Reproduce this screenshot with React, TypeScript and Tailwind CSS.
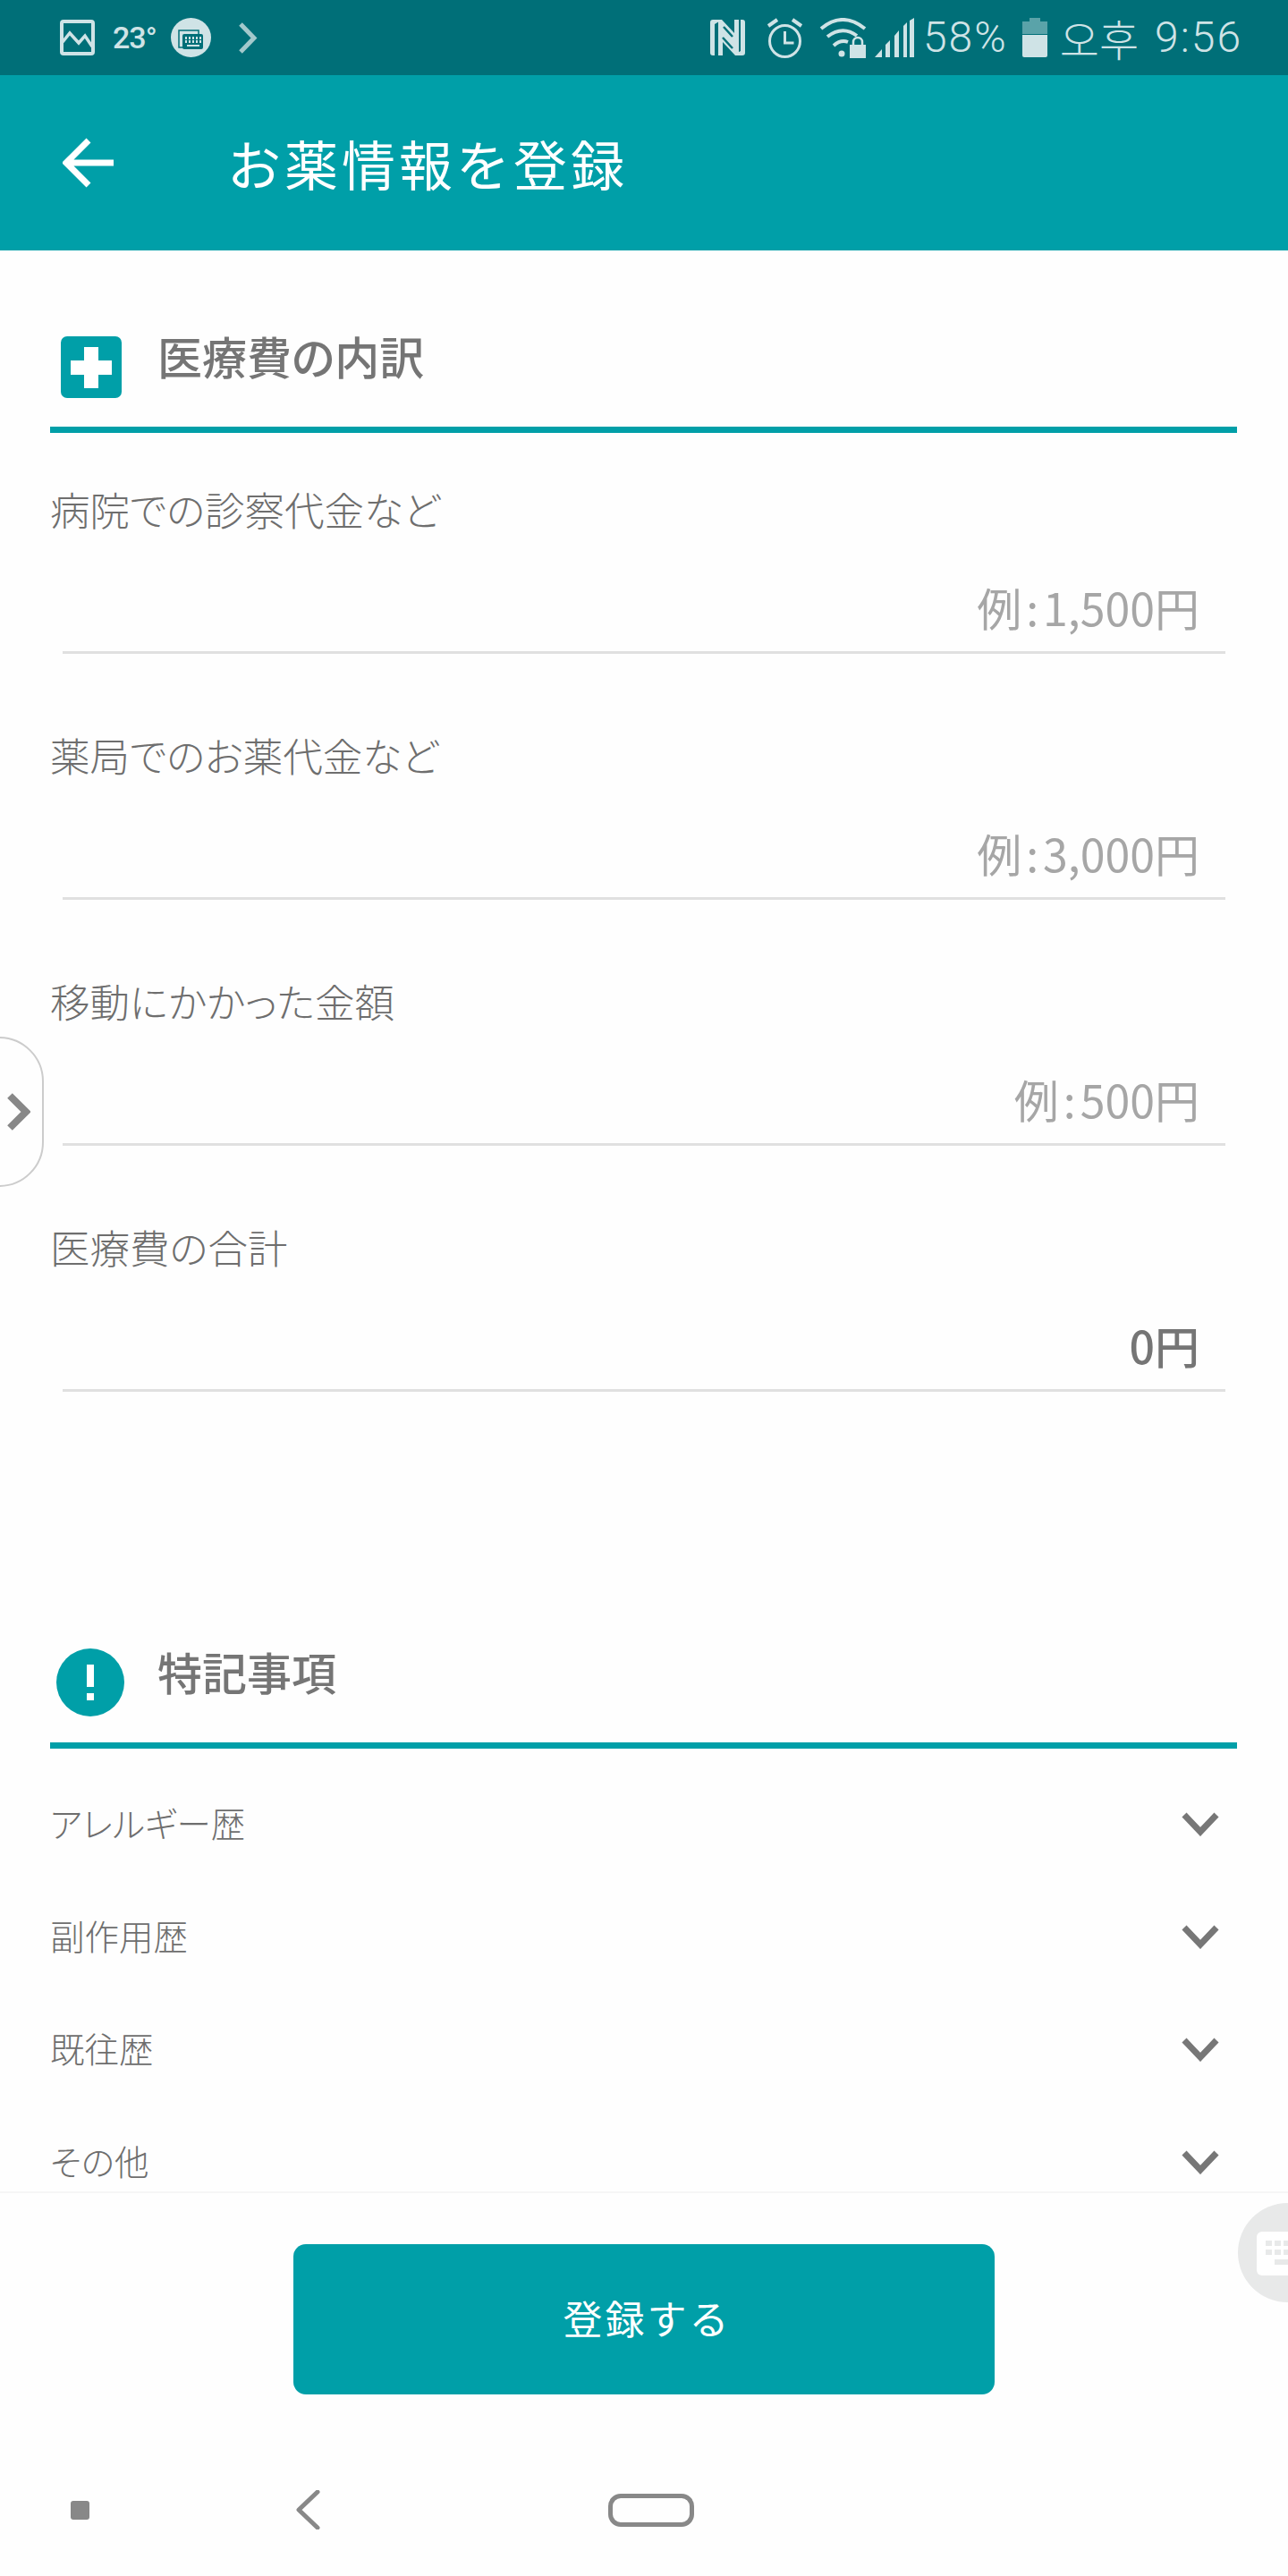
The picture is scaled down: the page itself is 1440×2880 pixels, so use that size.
import { ReactNode } from "react";

const jp = "font-['Noto_Sans_CJK_JP','Noto_Sans',sans-serif]";

function Chevron() {
  return (
    <svg width="42" height="27" viewBox="0 0 42 27" fill="none">
      <path d="M3 3 L21 22 L39 3" stroke="#777777" strokeWidth="7" strokeLinejoin="miter" />
    </svg>
  );
}

function SectionHeader({ icon, title, gap }: { icon: ReactNode; title: string; gap: string }) {
  return (
    <div className="h-[204px] pt-[83px] border-b-[7px] border-[#009fa8] flex items-start">
      {icon}
      <div className={`${gap} text-[50px] leading-[68px] font-medium text-[#757575] [font-feature-settings:'palt']`}>{title}</div>
    </div>
  );
}

function Field({ label, value, unit, dark }: { label: string; value: string; unit?: boolean; dark?: boolean }) {
  return (
    <div>
      <div className="text-[44.5px] leading-[60px] font-light text-[#6e6e6e] [font-feature-settings:'palt']">{label}</div>
      <div className="ml-[14px] mr-[13px] h-[132px] border-b-[3px] border-[#e0e0e0] flex items-end justify-end pr-[29px] pb-[16px]">
        <div className={`text-[50px] leading-[68px] ${dark ? "text-[#757575] font-medium" : "text-[#a6a6a6] font-normal"}`}>
          {unit && (
            <>
              例<span className="px-[5px]">:</span>
            </>
          )}
          {value}
        </div>
      </div>
    </div>
  );
}

function StatusBar() {
  const c = "#cfe3e6";
  return (
    <div className="h-[84px] bg-[#006f78] flex items-center justify-between pl-[67px] pr-[51px] text-[#cfe3e6] font-['Roboto',sans-serif]">
      <div className="flex items-center">
        <svg width="39" height="40" viewBox="0 0 39 40" fill="none">
          <rect x="2" y="2" width="35" height="36" rx="2" stroke={c} strokeWidth="4" />
          <path d="M3 25 L11 15 L21 26 L28 18 L36 30" stroke={c} strokeWidth="3.5" />
        </svg>
        <div className="ml-[20px] text-[34px] leading-[40px] font-medium tracking-[-1px]">23°</div>
        <svg className="ml-[16px]" width="45" height="44" viewBox="0 0 45 44">
          <ellipse cx="22.5" cy="22" rx="22.5" ry="22" fill={c} />
          <rect x="9" y="14" width="22" height="19" fill="none" stroke="#006f78" strokeWidth="1.5" />
          <rect x="13" y="18" width="23" height="17" rx="2" fill="#006f78" />
          <path d="M16 21h2v3h-2zM20 21h2v3h-2zM24 21h2v3h-2zM28 21h2v3h-2zM32 21h2v3h-2zM16 25h2v3h-2zM20 25h2v3h-2zM24 25h2v3h-2zM28 25h2v3h-2zM32 25h2v3h-2zM18 30h14v2H18z" fill={c} />
        </svg>
        <svg className="ml-[30px]" width="22" height="35" viewBox="0 0 22 35" fill="none">
          <path d="M3 2 L18 17.5 L3 33" stroke="#a3c9cc" strokeWidth="5" />
        </svg>
      </div>
      <div className="flex items-center">
        <svg width="39" height="40" viewBox="0 0 39 40">
          <path d="M3 0h7v2L5 5v35H3a3 3 0 0 1-3-3V3a3 3 0 0 1 3-3z" fill={c} />
          <path d="M36 40h-7v-2l5-3V0h2a3 3 0 0 1 3 3v34a3 3 0 0 1-3 3z" fill={c} />
          <path d="M9 0h4l14 15V0h5v40h-4L14 25v15H9z" fill={c} />
          <path d="M15 8 L25 19 M14 20 L25 32" stroke="#006f78" strokeWidth="2.5" />
        </svg>
        <svg className="ml-[24px]" width="41" height="45" viewBox="0 0 41 45" fill="none" stroke={c}>
          <ellipse cx="20.5" cy="26" rx="17" ry="17.5" strokeWidth="3" />
          <path d="M20.5 15v13h10" strokeWidth="3" />
          <path d="M2 9 L12 2 M39 9 L29 2" strokeWidth="4" />
        </svg>
        <svg className="ml-[18px]" width="53" height="45" viewBox="0 0 53 45" fill="none" stroke={c}>
          <path d="M2 12 Q26 -8 51 12" strokeWidth="4" />
          <path d="M9 21 Q26 8 42 20" strokeWidth="4" />
          <path d="M16 31 Q24 24 32 27" strokeWidth="4" />
          <circle cx="25" cy="40" r="3.5" fill={c} stroke="none" />
          <path d="M34 30 h18 v15 h-18z" fill={c} stroke="none" />
          <path d="M38 31 v-4 a5 5 0 0 1 10 0 v4" strokeWidth="2.5" />
        </svg>
        <svg className="ml-[9px]" width="44" height="44" viewBox="0 0 44 44">
          <path d="M0 44 L8 35 V44z M12 44 V30 L17 25 V44z M22 44 V20 L27 14 V44z M32 44 V9 L36 5 V44z M39 44 V3 L44 0 V44z" fill={c} />
        </svg>
        <div className="ml-[10px] text-[48px] leading-[50px] font-light tracking-[2px]">58%</div>
        <svg className="ml-[16px]" width="28" height="44" viewBox="0 0 28 44">
          <path d="M8 0h12v4h8v14H0V4h8z" fill="#5aa3a9" />
          <path d="M0 19h28v23a2 2 0 0 1-2 2H2a2 2 0 0 1-2-2z" fill={c} />
        </svg>
        <div className="ml-[14px] text-[48px] leading-[50px] font-['Noto_Sans_CJK_KR',sans-serif] font-light">오후</div>
        <div className="ml-[18px] text-[48px] leading-[50px] font-light tracking-[2px]">9:56</div>
      </div>
    </div>
  );
}

export default function App() {
  return (
    <div className={`w-[1440px] h-[2880px] relative overflow-hidden bg-[#fefefe] flex flex-col ${jp}`}>
      <StatusBar />

      <div className="h-[196px] bg-[#009fa8] flex items-center pl-[70px]">
        <svg width="57" height="56" viewBox="0 0 57 56" fill="none">
          <path d="M29 3 L4 28 L29 53 M4 28 H57" stroke="#fff" strokeWidth="7" />
        </svg>
        <div className="ml-[127px] text-[60px] leading-[80px] font-normal tracking-[4px] text-white">お薬情報を登録</div>
      </div>

      <div className="h-[2170px] overflow-hidden pl-[56px] pr-[57px]">
        <SectionHeader
          title="医療費の内訳"
          gap="ml-[40px]"
          icon={
            <div className="ml-[12px] mt-[13px] w-[68px] h-[69px] rounded-[7px] bg-[#009fa8] flex items-center justify-center">
              <svg width="46" height="46" viewBox="0 0 46 46">
                <path d="M15 0h16v15h15v16H31v15H15V31H0V15h15z" fill="#fff" />
              </svg>
            </div>
          }
        />
        <div className="pt-[55px] flex flex-col gap-[83px]">
          <Field label="病院での診察代金など" value="1,500円" unit />
          <Field label="薬局でのお薬代金など" value="3,000円" unit />
          <Field label="移動にかかった金額" value="500円" unit />
          <Field label="医療費の合計" value="0円" dark />
        </div>

        <div className="mt-[195px]">
          <SectionHeader
            title="特記事項"
            gap="ml-[37px]"
            icon={
              <div className="ml-[7px] mt-[9px] w-[76px] h-[76px] rounded-full bg-[#009fa8] flex flex-col items-center justify-center">
                <div className="w-[8px] h-[25px] bg-white" />
                <div className="mt-[7px] w-[8px] h-[8px] bg-white" />
              </div>
            }
          />
        </div>
        <div className="pt-[21px] pr-[20px]">
          {["アレルギー歴", "副作用歴", "既往歴", "その他"].map((t) => (
            <div key={t} className="h-[126px] flex items-center justify-between">
              <div className="pb-[3px] text-[38.5px] font-light text-[#6e6e6e] [font-feature-settings:'palt']">{t}</div>
              <Chevron />
            </div>
          ))}
        </div>
      </div>

      <div className="border-t-[2px] border-[#f6f6f6] flex-1 flex flex-col">
        <div className="mt-[57px] ml-[328px] w-[784px] h-[168px] rounded-[14px] bg-[#009fa8] flex items-center justify-center pl-[7px] pb-[4px] text-[44px] tracking-[3px] text-white">
          登録する
        </div>
        <div className="mt-[83px] h-[92px] flex items-center pl-[79px]">
          <div className="w-[21px] h-[21px] rounded-[3px] bg-[#888888]" />
          <svg className="ml-[230px]" width="28" height="44" viewBox="0 0 28 44" fill="none">
            <path d="M25 2 L4 22 L25 42" stroke="#888888" strokeWidth="5" strokeLinecap="round" strokeLinejoin="round" />
          </svg>
          <div className="ml-[322px] w-[96px] h-[37px] rounded-[14px] border-[5px] border-[#888888]" />
        </div>
      </div>

      <div className="absolute left-[-60px] top-[1159px] w-[109px] h-[168px] rounded-[50px] border-2 border-[#cccccc] bg-[#fefefe] flex items-center justify-end pr-[13px]">
        <svg width="26" height="42" viewBox="0 0 26 42" fill="none">
          <path d="M3 3 L21 21 L3 39" stroke="#888888" strokeWidth="8" />
        </svg>
      </div>

      <div className="absolute left-[1384px] top-[2463px] w-[111px] h-[111px] rounded-full bg-[#e8e9e9]">
        <div className="ml-[21px] mt-[32px] w-[70px] h-[49px] rounded-[6px] bg-white p-[10px]">
          <svg width="50" height="30" viewBox="0 0 50 30">
            <path d="M0 0h7v6H0zM10 0h7v6h-7zM20 0h7v6h-7zM30 0h7v6h-7zM0 10h7v6H0zM10 10h7v6h-7zM20 10h7v6h-7zM30 10h7v6h-7zM10 21h30v6H10z" fill="#e8e9e9" />
          </svg>
        </div>
      </div>
    </div>
  );
}
